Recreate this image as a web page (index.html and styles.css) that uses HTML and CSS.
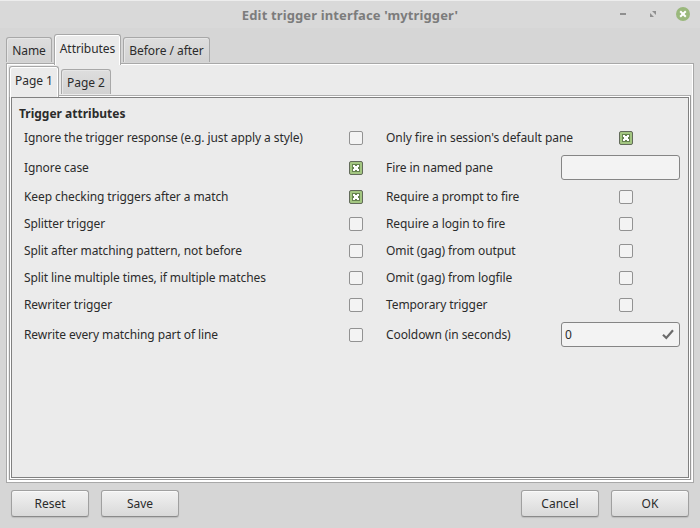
FILE: index.html
```html
<!DOCTYPE html>
<html lang="en">
<head>
<meta charset="utf-8">
<title>Edit trigger interface 'mytrigger'</title>
<link rel="stylesheet" href="styles.css">
</head>
<body>
<div class="window">
  <header class="titlebar">
    <h1>Edit trigger interface 'mytrigger'</h1>
    <div class="controls">
      <svg width="6" height="8" viewBox="0 0 6 8"><path d="M0 3h6v2H0z" fill="#8f8f8f"/></svg>
      <svg width="6" height="6" viewBox="0 0 6 6"><path d="M2 0h4v4zM0 2v4h4z" fill="#8f8f8f"/></svg>
      <svg width="14" height="14" viewBox="0 0 14 14"><circle cx="7" cy="7" r="7" fill="#9ab87c"/><path d="M4.2 4.2l5.6 5.6M9.8 4.2L4.2 9.8" stroke="#fff" stroke-width="2"/></svg>
    </div>
  </header>
  <nav class="tabs outer-tabs">
    <div class="tab t-name">Name</div>
    <div class="tab t-attr active">Attributes</div>
    <div class="tab t-before">Before / after</div>
  </nav>
  <main class="notebook">
    <nav class="tabs inner-tabs">
      <div class="tab t-p1 active">Page 1</div>
      <div class="tab t-p2">Page 2</div>
    </nav>
    <div class="page"><section class="panel">
      <h2>Trigger attributes</h2>
      <div class="form">
        <label>Ignore the trigger response (e.g. just apply a style)</label><i class="check"></i>
        <label class="wide">Only fire in session's default pane</label><i class="check on"><svg width="14" height="14"><use href="#cross"/></svg></i>
        <label>Ignore case</label><i class="check on"><svg width="14" height="14"><use href="#cross"/></svg></i>
        <label>Fire in named pane</label><div class="entry"></div>
        <label>Keep checking triggers after a match</label><i class="check on"><svg width="14" height="14"><use href="#cross"/></svg></i>
        <label>Require a prompt to fire</label><i class="check"></i>
        <label>Splitter trigger</label><i class="check"></i>
        <label>Require a login to fire</label><i class="check"></i>
        <label>Split after matching pattern, not before</label><i class="check"></i>
        <label>Omit (gag) from output</label><i class="check"></i>
        <label>Split line multiple times, if multiple matches</label><i class="check"></i>
        <label>Omit (gag) from logfile</label><i class="check"></i>
        <label>Rewriter trigger</label><i class="check"></i>
        <label>Temporary trigger</label><i class="check"></i>
        <label>Rewrite every matching part of line</label><i class="check"></i>
        <label>Cooldown (in seconds)</label><div class="entry"><span>0</span><svg width="12" height="11" viewBox="0 0 12 11"><path d="M1 5.8L4.3 9L11 1.2" fill="none" stroke="#6b6b6b" stroke-width="2.2"/></svg></div>
      </div>
    </section></div>
  </main>
  <footer class="actions">
    <button>Reset</button><button>Save</button><span class="spacer"></span><button>Cancel</button><button>OK</button>
  </footer>
</div>
<svg class="defs" width="0" height="0"><defs><g id="cross">
  <path d="M3 3h8v8H3z" fill="#66824f"/>
  <path d="M4 4h2v1h2V4h2v2H9v2h1v2H8V9H6v1H4V8h1V6H4z" fill="#fff"/>
</g></defs></svg>
</body>
</html>
```
FILE: styles.css
```css
* { box-sizing: border-box; }
body {
  margin: 0;
  overflow: hidden;
  font: 12px/16px "Noto Sans", sans-serif;
  color: #2b2b2b;
}
.window {
  width: 700px;
  height: 528px;
  display: flex;
  flex-direction: column;
  background: #d6d6d6;
}
.titlebar {
  height: 28px;
  flex: none;
  display: grid;
  grid-template-columns: 1fr;
  align-items: center;
  background: #d9d9d9;
  border-top: 1px solid #ededed;
}
.titlebar h1 {
  grid-area: 1 / 1;
  margin: 0;
  text-align: center;
  font-size: 13px;
  font-weight: 700;
  letter-spacing: 0.13px;
  color: #7c7c7c;
}
.controls {
  grid-area: 1 / 1;
  justify-self: end;
  display: flex;
  align-items: center;
  margin: -1px 10px 0 0;
}
.controls svg:nth-child(2) { margin: 0 20px 0 24px; }
.tabs { display: flex; align-items: flex-end; position: relative; }
.tab {
  height: 25px;
  padding-top: 5px;
  text-align: center;
  white-space: nowrap;
  letter-spacing: -0.05px;
  border: 1px solid #a8a8a8;
  border-bottom: 0;
  border-radius: 3px 3px 0 0;
  background: linear-gradient(#dedede, #d2d2d2);
  box-shadow: inset 1px 1px #e6e6e6;
}
.tab.active {
  background: #ebebeb;
  box-shadow: inset 1px 1px #fff, inset -1px 0 #fff;
}
.outer-tabs { height: 35px; margin: 0 6px; flex: none; }
.outer-tabs .tab { margin-bottom: 1px; }
.t-name { width: 46px; }
.outer-tabs .t-attr { width: 67px; height: 31px; padding-top: 6px; margin: 0 2px -2px 2px; }
.outer-tabs .t-before { width: 87px; }
.notebook {
  margin: 0 6px;
  height: 420px;
  flex: none;
  display: flex;
  flex-direction: column;
  padding: 2px;
  background: #ebebeb;
  border: 1px solid #a8a8a8;
  box-shadow: inset 0 0 0 1px #fff, inset 0 -2px #fff;
}
.inner-tabs { height: 29px; flex: none; }
.inner-tabs .t-p1 { width: 50px; height: 31px; margin: 0 2px -2px 0; padding-top: 6px; }
.inner-tabs .t-p2 { width: 50px; margin-bottom: 1px; }
.page {
  flex: 1;
  padding: 1px;
  border: 1px solid #9a9a9a;
  border-top-color: #adadad;
  background: #fff;
}
.panel {
  height: 100%;
  padding: 8px 7px;
  border: 1px solid #808080;
  background: #ebebeb;
}
.panel h2 { margin: 0; font-size: 12px; line-height: 16px; font-weight: 700; }
.form {
  display: grid;
  grid-template-columns: 325px 37px 175px 119px;
  grid-template-rows: 22px 27px repeat(5, 22px) 27px;
  gap: 5px 0;
  align-items: center;
  padding: 5px 0 0 5px;
  letter-spacing: -0.09px;
}
.form label { white-space: nowrap; }
.form .wide { letter-spacing: -0.05px; }
.check {
  width: 14px;
  height: 14px;
  display: block;
  border: 1px solid #929292;
  border-radius: 2px;
  background: #f3f3f3;
}
.check:nth-child(4n) { margin-left: 58px; }
.check.on { background: #a3c681; border-color: #626a5a; }
.check.on svg { display: block; margin: -1px; }
.entry {
  height: 25px;
  display: flex;
  align-items: center;
  justify-content: space-between;
  padding: 0 5px 0 3px;
  border: 1px solid #858585;
  border-radius: 3px;
  background: #f3f3f3;
}
.actions { display: flex; padding: 7px 11px 0; gap: 12px; }
.actions .spacer { flex: 1; }
.actions button {
  width: 78px;
  height: 27px;
  padding: 0;
  font: inherit;
  color: inherit;
  border: 1px solid #a0a0a0;
  border-bottom-color: #8a8a8a;
  border-radius: 3px;
  background: linear-gradient(#f2f2f2, #d9d9d9);
  box-shadow: inset 0 1px #fafafa, 0 1px 1px rgba(0, 0, 0, .12);
}
.defs { display: none; }
```
